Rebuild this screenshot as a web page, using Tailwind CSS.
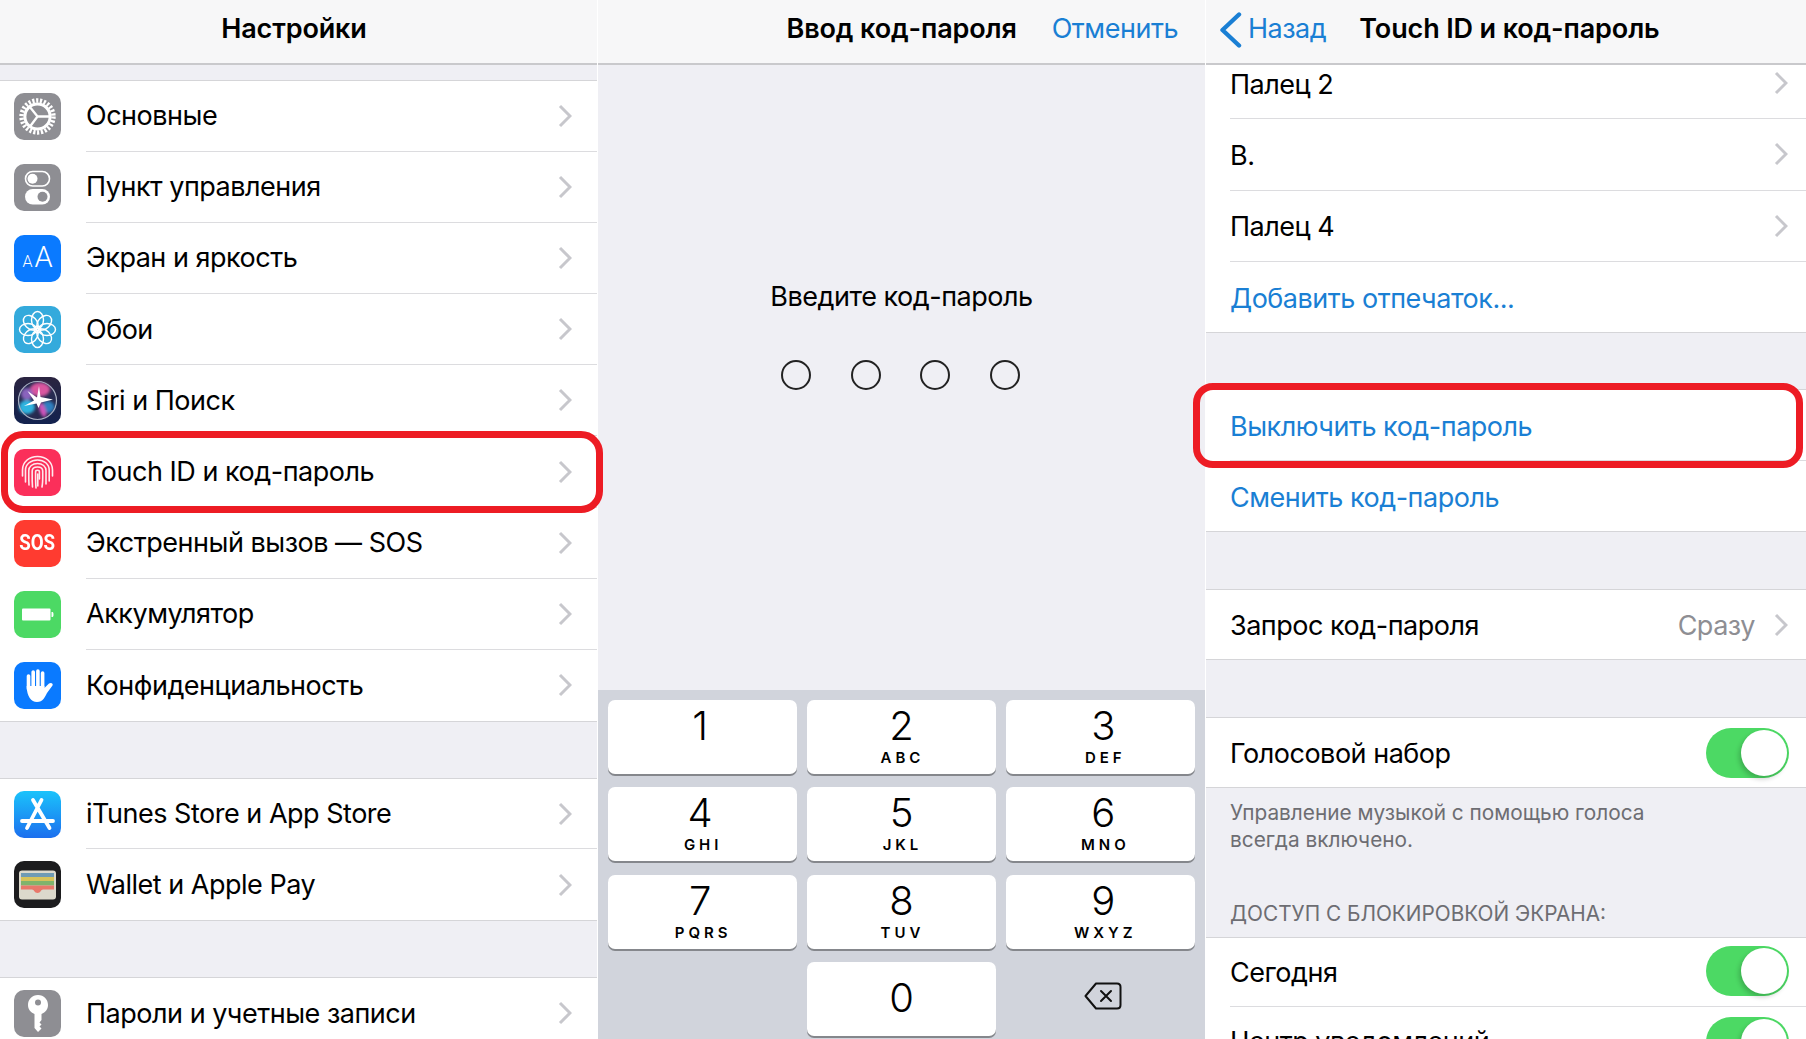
<!DOCTYPE html>
<html lang="ru">
<head>
  <meta charset="UTF-8">
  <title>Touch ID и код-пароль</title>
  <script src="https://cdn.jsdelivr.net/npm/@tailwindcss/browser@4"></script>
</head>
<body class="relative flex h-[1039px] w-[1806px] overflow-hidden bg-[#efeff4] font-['Inter',sans-serif] text-[27px] tracking-[-0.018em] text-black">

  <!-- Настройки -->
  <section class="flex h-full w-[597px] flex-col overflow-hidden">
    <header class="flex h-[65px] shrink-0 items-center justify-center border-b-2 border-[#c9c9cc] bg-[#f7f7f8] pb-[4px] pr-[9px] font-semibold tracking-[-0.005em]">Настройки</header>

    <div class="mt-[15px] border-y border-[#d5d5d8] bg-white">
      <div class="flex h-[71.1px] items-center pl-[14px]">
        <svg class="h-[47px] w-[47px] shrink-0" viewBox="0 0 47 47">
          <rect width="47" height="47" rx="10" fill="#8e8e93"/>
          <circle cx="23.5" cy="23.5" r="16" fill="none" stroke="#fff" stroke-width="4.4" stroke-dasharray="2.2 1.67"/>
          <circle cx="23.5" cy="23.5" r="12.6" fill="none" stroke="#fff" stroke-width="3"/>
          <path d="M23.5 23.5L36 23.5M23.5 23.5L15.5 13.5M23.5 23.5L16 33.5" stroke="#fff" stroke-width="2.3" fill="none"/>
        </svg>
        <div class="ml-[25px] flex h-full flex-1 items-center justify-between border-b border-[#dcdcdf] pr-[25px]">
          <span>Основные</span>
          <svg class="h-[24px] w-[14px]" viewBox="0 0 14 24"><path d="M2 2L12 12L2 22" fill="none" stroke="#c7c7cc" stroke-width="3"/></svg>
        </div>
      </div>
      <div class="flex h-[71.1px] items-center pl-[14px]">
        <svg class="h-[47px] w-[47px] shrink-0" viewBox="0 0 47 47">
          <rect width="47" height="47" rx="10" fill="#8e8e93"/>
          <rect x="11.5" y="7.5" width="24" height="14.5" rx="7.2" fill="none" stroke="#fff" stroke-width="1.6"/>
          <circle cx="18.5" cy="14.7" r="5" fill="#fff"/>
          <rect x="11" y="25" width="25" height="15.5" rx="7.7" fill="#fff"/>
          <circle cx="28.5" cy="32.7" r="5" fill="#8e8e93"/>
        </svg>
        <div class="ml-[25px] flex h-full flex-1 items-center justify-between border-b border-[#dcdcdf] pr-[25px]">
          <span>Пункт управления</span>
          <svg class="h-[24px] w-[14px]" viewBox="0 0 14 24"><path d="M2 2L12 12L2 22" fill="none" stroke="#c7c7cc" stroke-width="3"/></svg>
        </div>
      </div>
      <div class="flex h-[71.1px] items-center pl-[14px]">
        <div class="flex h-[47px] w-[47px] shrink-0 items-baseline justify-center gap-[2px] rounded-[10px] bg-[#0a7aff] pt-[4px] font-['Roboto',sans-serif] font-light leading-[36px] tracking-normal text-white">
          <span class="text-[16px]">A</span><span class="text-[29px]">A</span>
        </div>
        <div class="ml-[25px] flex h-full flex-1 items-center justify-between border-b border-[#dcdcdf] pr-[25px]">
          <span>Экран и яркость</span>
          <svg class="h-[24px] w-[14px]" viewBox="0 0 14 24"><path d="M2 2L12 12L2 22" fill="none" stroke="#c7c7cc" stroke-width="3"/></svg>
        </div>
      </div>
      <div class="flex h-[71.1px] items-center pl-[14px]">
        <svg class="h-[47px] w-[47px] shrink-0" viewBox="0 0 47 47">
          <rect width="47" height="47" rx="10" fill="#34aadc"/>
          <g fill="none" stroke="#fff" stroke-width="1.4">
            <ellipse cx="23.5" cy="14" rx="6" ry="8.5"/>
            <ellipse cx="23.5" cy="14" rx="6" ry="8.5" transform="rotate(45 23.5 23.5)"/>
            <ellipse cx="23.5" cy="14" rx="6" ry="8.5" transform="rotate(90 23.5 23.5)"/>
            <ellipse cx="23.5" cy="14" rx="6" ry="8.5" transform="rotate(135 23.5 23.5)"/>
            <ellipse cx="23.5" cy="14" rx="6" ry="8.5" transform="rotate(180 23.5 23.5)"/>
            <ellipse cx="23.5" cy="14" rx="6" ry="8.5" transform="rotate(225 23.5 23.5)"/>
            <ellipse cx="23.5" cy="14" rx="6" ry="8.5" transform="rotate(270 23.5 23.5)"/>
            <ellipse cx="23.5" cy="14" rx="6" ry="8.5" transform="rotate(315 23.5 23.5)"/>
            <circle cx="23.5" cy="23.5" r="3.5"/>
          </g>
        </svg>
        <div class="ml-[25px] flex h-full flex-1 items-center justify-between border-b border-[#dcdcdf] pr-[25px]">
          <span class="pt-[2px]">Обои</span>
          <svg class="h-[24px] w-[14px]" viewBox="0 0 14 24"><path d="M2 2L12 12L2 22" fill="none" stroke="#c7c7cc" stroke-width="3"/></svg>
        </div>
      </div>
      <div class="flex h-[71.1px] items-center pl-[14px]">
        <svg class="h-[47px] w-[47px] shrink-0" viewBox="0 0 47 47">
          <defs>
            <linearGradient id="siribg" x1="0" y1="0" x2="0" y2="1"><stop offset="0" stop-color="#2a2440"/><stop offset="1" stop-color="#13224f"/></linearGradient>
            <filter id="soft"><feGaussianBlur stdDeviation="1.5"/></filter>
            <filter id="softer"><feGaussianBlur stdDeviation="0.6"/></filter>
          </defs>
          <rect width="47" height="47" rx="10" fill="url(#siribg)"/>
          <circle cx="23.5" cy="23.5" r="19" fill="#262a50"/>
          <g filter="url(#soft)">
            <ellipse cx="26" cy="12.5" rx="10" ry="7" fill="#d9559f"/>
            <ellipse cx="13" cy="17" rx="6" ry="6" fill="#8a63bd"/>
            <ellipse cx="13" cy="30" rx="8" ry="7" fill="#2fb4e0"/>
            <ellipse cx="34" cy="30" rx="6.5" ry="6" fill="#2e7fc0"/>
            <ellipse cx="28.5" cy="33" rx="3" ry="7.5" fill="#cf52bb" transform="rotate(-20 28.5 33)"/>
          </g>
          <circle cx="23.5" cy="23.5" r="19" fill="none" stroke="#aab2c4" stroke-width="1.2"/>
          <g filter="url(#softer)">
            <path d="M25 9L26.5 20L39 22.5L27 25.5L24.5 31L22.5 26.5L10 29L20 23.5L13.5 14L23 20.5Z" fill="#fff"/>
          </g>
        </svg>
        <div class="ml-[25px] flex h-full flex-1 items-center justify-between border-b border-[#dcdcdf] pr-[25px]">
          <span class="pt-[2px]">Siri и Поиск</span>
          <svg class="h-[24px] w-[14px]" viewBox="0 0 14 24"><path d="M2 2L12 12L2 22" fill="none" stroke="#c7c7cc" stroke-width="3"/></svg>
        </div>
      </div>
      <div class="flex h-[71.1px] items-center pl-[14px]">
        <svg class="h-[47px] w-[47px] shrink-0" viewBox="0 0 47 47">
          <rect width="47" height="47" rx="10" fill="#fb2f5a"/>
          <g fill="none" stroke="#fff" stroke-opacity="0.9" stroke-width="1.6" stroke-linecap="round">
            <path d="M8.5 27V21C8.5 13 15 7.5 23.5 7.5S38.5 13 38.5 21V27"/>
            <path d="M11.5 33V21C11.5 15 17 11 23.5 11S35.2 15 35.2 21V32"/>
            <path d="M15 36C14.6 31 14.8 26 14.8 21.5C14.8 17.5 18.5 14.5 23.5 14.5S32 17.5 32 21.5V35"/>
            <path d="M18.5 38C18 32 18.2 27 18.2 22C18.2 19.5 20.5 18 23.5 18S28.7 19.5 28.7 22C28.7 28 29 33 28 38"/>
            <path d="M22 39C21.5 33 21.6 27 21.6 22.8C21.6 21.8 22.5 21.3 23.5 21.3S25.4 21.8 25.4 22.8V30"/>
            <path d="M23.8 25V37"/>
          </g>
        </svg>
        <div class="ml-[25px] flex h-full flex-1 items-center justify-between border-b border-[#dcdcdf] pr-[25px]">
          <span class="pt-[2px]">Touch ID и код-пароль</span>
          <svg class="h-[24px] w-[14px]" viewBox="0 0 14 24"><path d="M2 2L12 12L2 22" fill="none" stroke="#c7c7cc" stroke-width="3"/></svg>
        </div>
      </div>
      <div class="flex h-[71.1px] items-center pl-[14px]">
        <div class="flex h-[47px] w-[47px] shrink-0 items-center justify-center rounded-[10px] bg-[#ff3b30] font-['Roboto',sans-serif] text-[22px] font-bold leading-none tracking-normal text-white">
          <span class="scale-x-[0.85]">SOS</span>
        </div>
        <div class="ml-[25px] flex h-full flex-1 items-center justify-between border-b border-[#dcdcdf] pr-[25px]">
          <span class="pt-[2px]">Экстренный вызов — SOS</span>
          <svg class="h-[24px] w-[14px]" viewBox="0 0 14 24"><path d="M2 2L12 12L2 22" fill="none" stroke="#c7c7cc" stroke-width="3"/></svg>
        </div>
      </div>
      <div class="flex h-[71.1px] items-center pl-[14px]">
        <svg class="h-[47px] w-[47px] shrink-0" viewBox="0 0 47 47">
          <rect width="47" height="47" rx="10" fill="#4cd964"/>
          <rect x="8" y="17.5" width="28.5" height="12" rx="1" fill="#fff"/>
          <path d="M37.5 21H38.5C39.2 21 39.5 22 39.5 23.5S39.2 26 38.5 26H37.5Z" fill="#fff"/>
        </svg>
        <div class="ml-[25px] flex h-full flex-1 items-center justify-between border-b border-[#dcdcdf] pr-[25px]">
          <span class="pt-[2px]">Аккумулятор</span>
          <svg class="h-[24px] w-[14px]" viewBox="0 0 14 24"><path d="M2 2L12 12L2 22" fill="none" stroke="#c7c7cc" stroke-width="3"/></svg>
        </div>
      </div>
      <div class="flex h-[71.1px] items-center pl-[14px]">
        <svg class="h-[47px] w-[47px] shrink-0" viewBox="0 0 47 47">
          <rect width="47" height="47" rx="10" fill="#0a7aff"/>
          <g stroke="#fff" stroke-width="3.6" stroke-linecap="round" fill="none">
            <path d="M14.5 14V27"/><path d="M19.2 10V26"/><path d="M23.9 9V26"/><path d="M28.6 11V27"/>
          </g>
          <path d="M12.7 25C13 34 17 40 23 40C29 40 31 35 33 31L38.5 23.5C39.5 21.5 37 20 35 21.5L30.4 26L30.4 24H12.7Z" fill="#fff"/>
        </svg>
        <div class="ml-[25px] flex h-full flex-1 items-center justify-between pr-[25px]">
          <span class="pt-[2px]">Конфиденциальность</span>
          <svg class="h-[24px] w-[14px]" viewBox="0 0 14 24"><path d="M2 2L12 12L2 22" fill="none" stroke="#c7c7cc" stroke-width="3"/></svg>
        </div>
      </div>
    </div>

    <div class="mt-[56px] border-y border-[#d5d5d8] bg-white">
      <div class="flex h-[70.5px] items-center pl-[14px]">
        <svg class="h-[47px] w-[47px] shrink-0" viewBox="0 0 47 47">
          <defs><linearGradient id="appstore" x1="0" y1="0" x2="0" y2="1"><stop offset="0" stop-color="#1bc3fb"/><stop offset="1" stop-color="#1c6fee"/></linearGradient></defs>
          <rect width="47" height="47" rx="10" fill="url(#appstore)"/>
          <path d="M27.5 9L13 37M19 9L35.5 37M8 30H39" fill="none" stroke="#fff" stroke-width="3.8" stroke-linecap="round"/>
        </svg>
        <div class="ml-[25px] flex h-full flex-1 items-center justify-between border-b border-[#dcdcdf] pr-[25px]">
          <span class="pt-[2px]">iTunes Store и App Store</span>
          <svg class="h-[24px] w-[14px]" viewBox="0 0 14 24"><path d="M2 2L12 12L2 22" fill="none" stroke="#c7c7cc" stroke-width="3"/></svg>
        </div>
      </div>
      <div class="flex h-[70.5px] items-center pl-[14px]">
        <svg class="h-[47px] w-[47px] shrink-0" viewBox="0 0 47 47">
          <rect width="47" height="47" rx="10" fill="#1c1c1e"/>
          <rect x="5" y="9.5" width="37" height="29" rx="3" fill="#dcd9cc"/>
          <rect x="7" y="12" width="33" height="4" fill="#6f9bb4"/>
          <rect x="7" y="16" width="33" height="4" fill="#d7c35a"/>
          <rect x="7" y="20" width="33" height="4.5" fill="#7fb46c"/>
          <path d="M7 24.5H40V28.5H29C27 28.5 26.5 32 23.5 32S20 28.5 18 28.5H7Z" fill="#e8786a"/>
        </svg>
        <div class="ml-[25px] flex h-full flex-1 items-center justify-between pr-[25px]">
          <span class="pt-[2px]">Wallet и Apple Pay</span>
          <svg class="h-[24px] w-[14px]" viewBox="0 0 14 24"><path d="M2 2L12 12L2 22" fill="none" stroke="#c7c7cc" stroke-width="3"/></svg>
        </div>
      </div>
    </div>

    <div class="mt-[56px] border-t border-[#d5d5d8] bg-white">
      <div class="flex h-[71.1px] items-center pl-[14px]">
        <svg class="h-[47px] w-[47px] shrink-0" viewBox="0 0 47 47">
          <rect width="47" height="47" rx="10" fill="#8e8e93"/>
          <path d="M24 5C18 5 14 9.5 14 15C14 19 16.5 22.5 20.5 24V38L24 42L27.5 38.5L25.5 36.5L27.5 34.5L25.5 32.5L27.5 30V24C31.5 22.5 34 19 34 15C34 9.5 30 5 24 5Z" fill="#fff"/>
          <circle cx="24" cy="12.5" r="3" fill="#8e8e93"/>
        </svg>
        <div class="ml-[25px] flex h-full flex-1 items-center justify-between border-b border-[#dcdcdf] pr-[25px]">
          <span class="pt-[2px]">Пароли и учетные записи</span>
          <svg class="h-[24px] w-[14px]" viewBox="0 0 14 24"><path d="M2 2L12 12L2 22" fill="none" stroke="#c7c7cc" stroke-width="3"/></svg>
        </div>
      </div>
    </div>
  </section>

  <!-- Ввод код-пароля -->
  <section class="flex h-full w-[608px] flex-col overflow-hidden border-l border-white">
    <header class="flex h-[65px] shrink-0 items-center justify-end gap-[35px] border-b-2 border-[#c9c9cc] bg-[#f7f7f8] pb-[4px] pr-[27px]">
      <span class="font-semibold tracking-[-0.005em]">Ввод код-пароля</span>
      <span class="text-[#1a7fd4]">Отменить</span>
    </header>
    <main class="flex flex-1 flex-col items-center pt-[215px]">
      <p class="leading-[34px]">Введите код-пароль</p>
      <div class="mt-[46px] flex gap-[39.7px] pr-[2px]">
        <span class="h-[30px] w-[30px] rounded-full border-2 border-[#222]"></span>
        <span class="h-[30px] w-[30px] rounded-full border-2 border-[#222]"></span>
        <span class="h-[30px] w-[30px] rounded-full border-2 border-[#222]"></span>
        <span class="h-[30px] w-[30px] rounded-full border-2 border-[#222]"></span>
      </div>
    </main>
    <div class="grid h-[349px] shrink-0 grid-cols-3 content-start gap-x-[9.5px] gap-y-[13.3px] bg-[#d1d4dc] px-[10px] pt-[10px] tracking-normal">
      <div class="flex h-[74px] flex-col items-center rounded-[7px] bg-white pr-[5px] pt-[4px] shadow-[0_2px_0_#85878c]"><span class="text-[40px] font-[350] leading-[43px]">1</span></div>
      <div class="flex h-[74px] flex-col items-center rounded-[7px] bg-white pt-[4px] shadow-[0_2px_0_#85878c]"><span class="text-[40px] font-[350] leading-[43px]">2</span><span class="ml-[2px] pt-[2px] text-[15px] font-semibold leading-[17px] tracking-[4px]">ABC</span></div>
      <div class="flex h-[74px] flex-col items-center rounded-[7px] bg-white pl-[6px] pt-[4px] shadow-[0_2px_0_#85878c]"><span class="text-[40px] font-[350] leading-[43px]">3</span><span class="ml-[4px] pt-[2px] text-[15px] font-semibold leading-[17px] tracking-[4px]">DEF</span></div>
      <div class="flex h-[74px] flex-col items-center rounded-[7px] bg-white pr-[5px] pt-[4px] shadow-[0_2px_0_#85878c]"><span class="text-[40px] font-[350] leading-[43px]">4</span><span class="ml-[6px] pt-[2px] text-[15px] font-semibold leading-[17px] tracking-[4px]">GHI</span></div>
      <div class="flex h-[74px] flex-col items-center rounded-[7px] bg-white pt-[4px] shadow-[0_2px_0_#85878c]"><span class="text-[40px] font-[350] leading-[43px]">5</span><span class="ml-[2px] pt-[2px] text-[15px] font-semibold leading-[17px] tracking-[4px]">JKL</span></div>
      <div class="flex h-[74px] flex-col items-center rounded-[7px] bg-white pl-[6px] pt-[4px] shadow-[0_2px_0_#85878c]"><span class="text-[40px] font-[350] leading-[43px]">6</span><span class="ml-[4px] pt-[2px] text-[15px] font-semibold leading-[17px] tracking-[4px]">MNO</span></div>
      <div class="flex h-[74px] flex-col items-center rounded-[7px] bg-white pr-[5px] pt-[4px] shadow-[0_2px_0_#85878c]"><span class="text-[40px] font-[350] leading-[43px]">7</span><span class="ml-[6px] pt-[2px] text-[15px] font-semibold leading-[17px] tracking-[4px]">PQRS</span></div>
      <div class="flex h-[74px] flex-col items-center rounded-[7px] bg-white pt-[4px] shadow-[0_2px_0_#85878c]"><span class="text-[40px] font-[350] leading-[43px]">8</span><span class="ml-[2px] pt-[2px] text-[15px] font-semibold leading-[17px] tracking-[4px]">TUV</span></div>
      <div class="flex h-[74px] flex-col items-center rounded-[7px] bg-white pl-[6px] pt-[4px] shadow-[0_2px_0_#85878c]"><span class="text-[40px] font-[350] leading-[43px]">9</span><span class="ml-[4px] pt-[2px] text-[15px] font-semibold leading-[17px] tracking-[4px]">WXYZ</span></div>
      <div></div>
      <div class="flex h-[74px] items-center justify-center rounded-[7px] bg-white pb-[2px] shadow-[0_2px_0_#85878c]"><span class="text-[40px] font-[350] leading-none">0</span></div>
      <div class="flex h-[74px] items-center justify-center pb-[5px] pl-[6px]">
        <svg class="h-[28px] w-[38px]" viewBox="0 0 38 28" fill="none" stroke="#111" stroke-width="2" stroke-linejoin="round" stroke-linecap="round">
          <path d="M12 1.5H33C35 1.5 36.5 3 36.5 5V23C36.5 25 35 26.5 33 26.5H12L1.5 14Z"/>
          <path d="M17 9L27 19M27 9L17 19"/>
        </svg>
      </div>
    </div>
  </section>

  <!-- Touch ID и код-пароль -->
  <section class="flex h-full flex-1 flex-col overflow-hidden border-l border-white">
    <header class="relative z-10 flex h-[65px] shrink-0 items-center border-b-2 border-[#c9c9cc] bg-[#f7f7f8] pb-[4px] pl-[13px]">
      <svg class="h-[36px] w-[23px]" viewBox="0 0 23 36"><path d="M20 2.5L3.5 18L20 33.5" fill="none" stroke="#1a7fd4" stroke-width="4.4" stroke-linecap="round" stroke-linejoin="round"/></svg>
      <span class="ml-[6px] text-[#1a7fd4]">Назад</span>
      <span class="ml-[33px] font-semibold tracking-[-0.005em]">Touch ID и код-пароль</span>
    </header>

    <div class="-mt-[17px] border-b border-[#d5d5d8] bg-white">
      <div class="ml-[24px] flex h-[71.3px] items-center justify-between border-b border-[#dcdcdf] pr-[18px]">
        <span class="pt-[4px]">Палец 2</span>
        <svg class="h-[24px] w-[14px]" viewBox="0 0 14 24"><path d="M2 2L12 12L2 22" fill="none" stroke="#c7c7cc" stroke-width="3"/></svg>
      </div>
      <div class="ml-[24px] flex h-[71.3px] items-center justify-between border-b border-[#dcdcdf] pr-[18px]">
        <span class="pt-[4px]">В.</span>
        <svg class="h-[24px] w-[14px]" viewBox="0 0 14 24"><path d="M2 2L12 12L2 22" fill="none" stroke="#c7c7cc" stroke-width="3"/></svg>
      </div>
      <div class="ml-[24px] flex h-[71.3px] items-center justify-between border-b border-[#dcdcdf] pr-[18px]">
        <span class="pt-[3px]">Палец 4</span>
        <svg class="h-[24px] w-[14px]" viewBox="0 0 14 24"><path d="M2 2L12 12L2 22" fill="none" stroke="#c7c7cc" stroke-width="3"/></svg>
      </div>
      <div class="ml-[24px] flex h-[70px] items-center pt-[5px] text-[#1a7fd4]">Добавить отпечаток...</div>
    </div>

    <div class="mt-[56px] border-y border-[#d5d5d8] bg-white">
      <div class="ml-[24px] flex h-[71.3px] items-center border-b border-[#dcdcdf] pt-[4px] text-[#1a7fd4]">Выключить код-пароль</div>
      <div class="ml-[24px] flex h-[70px] items-center pt-[4px] text-[#1a7fd4]">Сменить код-пароль</div>
    </div>

    <div class="mt-[57px] border-y border-[#d5d5d8] bg-white">
      <div class="ml-[24px] flex h-[69px] items-center pr-[18px]">
        <span class="pt-[4px]">Запрос код-пароля</span>
        <span class="ml-auto pt-[4px] text-[#8e8e93]">Сразу</span>
        <svg class="ml-[19px] h-[24px] w-[14px]" viewBox="0 0 14 24"><path d="M2 2L12 12L2 22" fill="none" stroke="#c7c7cc" stroke-width="3"/></svg>
      </div>
    </div>

    <div class="mt-[57px] border-y border-[#d5d5d8] bg-white">
      <div class="ml-[24px] flex h-[69px] items-center justify-between pr-[17px]">
        <span class="pt-[4px]">Голосовой набор</span>
        <div class="flex h-[50px] w-[83px] items-center justify-end rounded-full bg-[#4cd964] pr-[2px]">
          <span class="h-[46px] w-[46px] rounded-full bg-white shadow-[-2px_3px_5px_rgba(0,0,0,0.2)]"></span>
        </div>
      </div>
    </div>

    <p class="ml-[24px] mt-[12px] text-[20.8px] leading-[26.5px] tracking-normal text-[#6d6d72]">Управление музыкой с помощью голоса<br>всегда включено.</p>
    <p class="ml-[24px] mt-[47px] text-[20.8px] leading-[27px] tracking-normal text-[#6d6d72]">ДОСТУП С БЛОКИРОВКОЙ ЭКРАНА:</p>

    <div class="mt-[10px] border-t border-[#d5d5d8] bg-white">
      <div class="ml-[24px] flex h-[69px] items-center justify-between border-b border-[#dcdcdf] pr-[17px]">
        <span class="pt-[2px]">Сегодня</span>
        <div class="mb-[2px] flex h-[50px] w-[83px] items-center justify-end rounded-full bg-[#4cd964] pr-[2px]">
          <span class="h-[46px] w-[46px] rounded-full bg-white shadow-[-2px_3px_5px_rgba(0,0,0,0.2)]"></span>
        </div>
      </div>
      <div class="ml-[24px] flex h-[71px] items-center justify-between pr-[17px]">
        <span>Центр уведомлений</span>
        <div class="mb-[2px] flex h-[50px] w-[83px] items-center justify-end rounded-full bg-[#4cd964] pr-[2px]">
          <span class="h-[46px] w-[46px] rounded-full bg-white shadow-[-2px_3px_5px_rgba(0,0,0,0.2)]"></span>
        </div>
      </div>
    </div>
  </section>

  <!-- Красные рамки поверх скриншотов -->
  <div class="pointer-events-none absolute left-[1px] top-[431px] h-[82px] w-[602px] rounded-[22px] border-[7px] border-[#ed1c24]"></div>
  <div class="pointer-events-none absolute left-[1193px] top-[383px] h-[85px] w-[610px] rounded-[20px] border-[7px] border-[#ed1c24]"></div>
</body>
</html>
